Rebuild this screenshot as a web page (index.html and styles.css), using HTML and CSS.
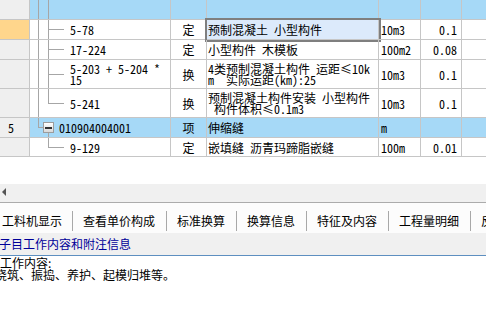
FILE: index.html
```html
<!DOCTYPE html>
<html lang="zh-CN">
<head>
    <meta charset="UTF-8">
    <title>分部分项</title>
    <link rel="stylesheet" href="styles.css">
</head>
<body>
    <div class="grid">
        <div class="row row-bill">
            <div class="cell num"></div>
            <div class="cell code">
                <span class="lane lane-a pass"><i></i><i></i></span>
                <span class="lane lane-b pass"><i></i><i></i></span>
            </div>
            <div class="cell type"></div>
            <div class="cell name"></div>
            <div class="cell unit"></div>
            <div class="cell qty"></div>
            <div class="cell"></div>
        </div>
        <div class="row">
            <div class="cell num num-current"></div>
            <div class="cell code">
                <span class="lane lane-a pass"><i></i><i></i></span>
                <span class="lane lane-b tee"><i></i><i></i></span>
                <span class="code-text">5-78</span>
            </div>
            <div class="cell type">定</div>
            <div class="cell name selected">预制混凝土 小型构件</div>
            <div class="cell unit">10m3</div>
            <div class="cell qty">0.1</div>
            <div class="cell"></div>
        </div>
        <div class="row">
            <div class="cell num"></div>
            <div class="cell code">
                <span class="lane lane-a pass"><i></i><i></i></span>
                <span class="lane lane-b tee"><i></i><i></i></span>
                <span class="code-text">17-224</span>
            </div>
            <div class="cell type">定</div>
            <div class="cell name">小型构件 木模板</div>
            <div class="cell unit">100m2</div>
            <div class="cell qty">0.08</div>
            <div class="cell"></div>
        </div>
        <div class="row row-tall">
            <div class="cell num"></div>
            <div class="cell code">
                <span class="lane lane-a pass"><i></i><i></i></span>
                <span class="lane lane-b tee"><i></i><i></i></span>
                <span class="code-text">5-203 + 5-204 *
15</span>
            </div>
            <div class="cell type">换</div>
            <div class="cell name">4类预制混凝土构件 运距≤10k
m  实际运距(km):25</div>
            <div class="cell unit">10m3</div>
            <div class="cell qty">0.1</div>
            <div class="cell"></div>
        </div>
        <div class="row row-tall">
            <div class="cell num"></div>
            <div class="cell code">
                <span class="lane lane-a pass"><i></i><i></i></span>
                <span class="lane lane-b end"><i></i><i></i></span>
                <span class="code-text">5-241</span>
            </div>
            <div class="cell type">换</div>
            <div class="cell name">预制混凝土构件安装 小型构件
 构件体积≤0.1m3</div>
            <div class="cell unit">10m3</div>
            <div class="cell qty">0.1</div>
            <div class="cell"></div>
        </div>
        <div class="row row-bill">
            <div class="cell num">5</div>
            <div class="cell code">
                <span class="lane lane-stub end"><i></i><i></i></span>
                <span class="node"><i></i><span class="box"></span><i class="node-tail"></i></span>
                <span class="code-text code-bill">010904004001</span>
            </div>
            <div class="cell type">项</div>
            <div class="cell name">伸缩缝</div>
            <div class="cell unit">m</div>
            <div class="cell qty"></div>
            <div class="cell"></div>
        </div>
        <div class="row row-short">
            <div class="cell num"></div>
            <div class="cell code">
                <span class="lane lane-a"><i></i><i></i></span>
                <span class="lane lane-b end"><i></i><i></i></span>
                <span class="code-text">9-129</span>
            </div>
            <div class="cell type">定</div>
            <div class="cell name">嵌填缝 沥青玛蹄脂嵌缝</div>
            <div class="cell unit">100m</div>
            <div class="cell qty">0.01</div>
            <div class="cell"></div>
        </div>
    </div>

    <div class="blank"></div>

    <div class="hscroll">
        <span class="arrow-left"></span>
    </div>

    <div class="tabs">
        <div class="tab">工料机显示</div>
        <div class="tab">查看单价构成</div>
        <div class="tab">标准换算</div>
        <div class="tab">换算信息</div>
        <div class="tab">特征及内容</div>
        <div class="tab">工程量明细</div>
        <div class="tab">反查图形工程量</div>
    </div>

    <div class="note-bar">子目工作内容和附注信息</div>

    <div class="note-body">
        <p>工作内容:</p>
        <p class="shifted">浇筑、振捣、养护、起模归堆等。</p>
    </div>
</body>
</html>
```

FILE: styles.css
```css
:root {
    --grid-line: #c6c6c6;
    --tree-line: #a6a6a6;
    --bill-blue: #a6d9f7;
    --head-gray: #efefef;
}

* {
    box-sizing: border-box;
    margin: 0;
    padding: 0;
}

body {
    width: 486px;
    height: 334px;
    overflow: hidden;
    background: #fff;
    color: #000;
    font-family: "Noto Sans Mono CJK SC", "Noto Sans CJK SC", sans-serif;
    font-size: 12px;
    line-height: 12px;
}

/* table */

.row {
    display: grid;
    grid-template-columns: 30px 141px 36px 172px 42px 41px 1fr;
    height: 20px;
}

.row-tall {
    height: 29px;
}

.row-short {
    height: 19px;
}

.cell {
    display: flex;
    align-items: center;
    border-right: 1px solid var(--grid-line);
    border-bottom: 1px solid var(--grid-line);
    white-space: pre;
    line-height: 11px;
    overflow: hidden;
}

.cell:last-child {
    border-right: none;
}

.num {
    background: var(--head-gray);
    padding-left: 8px;
}

.num-current {
    background: #ffd68c;
}

.row-bill .cell:not(.num) {
    background: var(--bill-blue);
}

.code {
    align-items: stretch;
    padding-left: 8px;
}

.code-text {
    align-self: center;
    margin-left: 6px;
}

.code-bill {
    margin-left: 5px;
}

/* tree lines */

.lane {
    display: flex;
    flex-direction: column;
    flex: none;
}

.lane i {
    flex: 1;
}

.lane-a {
    width: 10px;
}

.lane-b {
    width: 16px;
}

.lane-stub {
    width: 5px;
}

.pass i,
.tee i {
    border-left: 1px solid var(--tree-line);
}

.tee i:first-child,
.end i:first-child {
    border-bottom: 1px solid var(--tree-line);
}

.end i:first-child {
    border-left: 1px solid var(--tree-line);
}

.node {
    display: flex;
    flex-direction: column;
    width: 11px;
    flex: none;
}

.node i {
    flex: 1;
}

.node .node-tail {
    margin-left: 5px;
    border-left: 1px solid var(--tree-line);
}

.box {
    display: flex;
    align-items: center;
    justify-content: center;
    height: 11px;
    border: 1px solid #9c9c9c;
    background: linear-gradient(#ffffff, #d8d8d8);
}

.box::after {
    content: "";
    width: 7px;
    height: 2px;
    background: #333;
}

.type {
    justify-content: center;
}

.name {
    padding-left: 1px;
}

.name.selected {
    background: #dceafb;
    outline: 2px solid #7f7f7f;
}

.unit {
    padding-left: 2px;
}

.qty {
    justify-content: flex-end;
    padding-right: 4px;
}

/* lower panel */

.blank {
    height: 27px;
}

.hscroll {
    display: flex;
    align-items: center;
    height: 19px;
    background: #f0f0f0;
    border-bottom: 1px solid #ababab;
}

.arrow-left {
    margin-left: 2px;
    margin-top: -2px;
    border-right: 4px solid #555;
    border-top: 4px solid transparent;
    border-bottom: 4px solid transparent;
}

.tabs {
    display: flex;
    align-items: flex-end;
    height: 30px;
    padding-bottom: 2px;
    background: #fcfcfc;
    font-family: "Noto Sans CJK SC", sans-serif;
    white-space: nowrap;
    overflow: hidden;
}

.tab {
    height: 20px;
    line-height: 20px;
    padding: 0 11px 0 10px;
    border-right: 1px solid #a8a8a8;
}

.tab:first-child {
    padding-left: 2px;
    padding-right: 10px;
}

.note-bar {
    height: 23px;
    line-height: 22px;
    margin-left: -1px;
    background: #f0f0f0;
    color: #000099;
    font-family: "Noto Sans CJK SC", sans-serif;
    border-bottom: 1px solid #5d8fc0;
}

.note-body {
    padding-top: 1px;
    font-family: "Noto Sans CJK SC", sans-serif;
    line-height: 12px;
}

.shifted {
    margin-left: -5px;
}
```
